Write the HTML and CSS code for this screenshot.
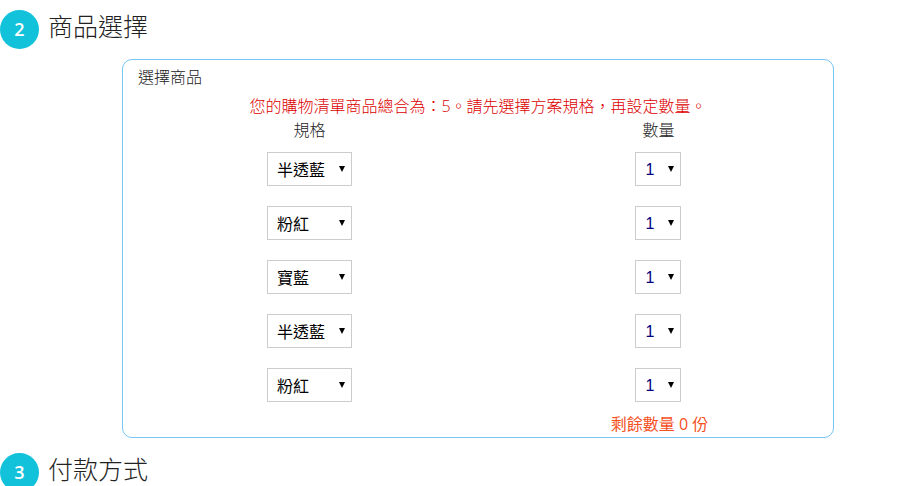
FILE: index.html
```
<!DOCTYPE html>
<html lang="zh-Hant">
<head>
    <meta charset="UTF-8">
    <meta name="viewport" content="width=device-width, initial-scale=1">
    <title>商品選擇</title>
    <link rel="stylesheet" href="styles.css">
</head>
<body>
    <section class="step">
        <div class="step-head">
            <span class="step-num">2</span>
            <h2 class="step-title">商品選擇</h2>
        </div>

        <div class="panel">
            <h3 class="panel-title">選擇商品</h3>
            <p class="notice">您的購物清單商品總合為：5。請先選擇方案規格，再設定數量。</p>
            <table class="items">
                <thead>
                    <tr>
                        <th class="col-spec" id="spec">規格</th>
                        <th id="qty">數量</th>
                    </tr>
                </thead>
                <tbody>
                    <tr>
                        <td><select class="select select-spec" aria-labelledby="spec"><option selected>半透藍</option><option>粉紅</option><option>寶藍</option></select></td>
                        <td><select class="select select-qty" aria-labelledby="qty"><option>0</option><option selected>1</option></select></td>
                    </tr>
                    <tr>
                        <td><select class="select select-spec" aria-labelledby="spec"><option>半透藍</option><option selected>粉紅</option><option>寶藍</option></select></td>
                        <td><select class="select select-qty" aria-labelledby="qty"><option>0</option><option selected>1</option></select></td>
                    </tr>
                    <tr>
                        <td><select class="select select-spec" aria-labelledby="spec"><option>半透藍</option><option>粉紅</option><option selected>寶藍</option></select></td>
                        <td><select class="select select-qty" aria-labelledby="qty"><option>0</option><option selected>1</option></select></td>
                    </tr>
                    <tr>
                        <td><select class="select select-spec" aria-labelledby="spec"><option selected>半透藍</option><option>粉紅</option><option>寶藍</option></select></td>
                        <td><select class="select select-qty" aria-labelledby="qty"><option>0</option><option selected>1</option></select></td>
                    </tr>
                    <tr>
                        <td><select class="select select-spec" aria-labelledby="spec"><option>半透藍</option><option selected>粉紅</option><option>寶藍</option></select></td>
                        <td><select class="select select-qty" aria-labelledby="qty"><option>0</option><option selected>1</option></select></td>
                    </tr>
                </tbody>
                <tfoot>
                    <tr>
                        <td></td>
                        <td class="remain">剩餘數量 0 份</td>
                    </tr>
                </tfoot>
            </table>
        </div>
    </section>

    <section class="step">
        <div class="step-head">
            <span class="step-num">3</span>
            <h2 class="step-title">付款方式</h2>
        </div>
    </section>
</body>
</html>
```

FILE: styles.css
```
* {
    box-sizing: border-box;
}

body {
    margin: 0;
    padding-top: 10px;
    background: #fff;
    color: #222;
    font-family: "Open Sans", "Noto Sans CJK TC", sans-serif;
    font-size: 16px;
    font-weight: 300;
    line-height: 24px;
}

.step {
    margin-bottom: 15px;
}

.step:last-child {
    margin-bottom: 0;
}

.step-head {
    display: flex;
    gap: 9px;
}

.step-num {
    width: 39px;
    height: 39px;
    border-radius: 50%;
    background: #12c2da;
    color: #fff;
    font-size: 18px;
    font-weight: 600;
    line-height: 39px;
    text-align: center;
}

.step-title {
    margin: 0;
    font-size: 25px;
    font-weight: 300;
    line-height: 32px;
}

/* 商品選擇外框 */
.panel {
    margin: 10px 65px 0 122px;
    padding: 5px 6px 1px;
    border: 1px solid #76c5f7;
    border-radius: 10px;
}

.panel-title {
    margin: 0 0 5px;
    padding-left: 9px;
    font-size: 16px;
    font-weight: 300;
}

.notice {
    margin: 0;
    color: #d00;
    text-align: center;
}

.items {
    width: 100%;
    border-collapse: collapse;
    table-layout: fixed;
    text-align: center;
}

.items th,
.items td {
    padding: 0 2px 0 0;
    font-weight: 300;
}

.items tbody td {
    padding: 10px 2px 10px 0;
}

.items .col-spec {
    width: 52%;
}

.items .remain {
    padding-right: 0;
    color: #f4511e;
    font-weight: 400;
}

/* 下拉選單 */
.select {
    display: block;
    height: 34px;
    margin: 0 auto;
    padding: 2px 18px 0 9px;
    border: 1px solid #ccc;
    border-radius: 0;
    background: #fff url("data:image/svg+xml,%3Csvg xmlns='http://www.w3.org/2000/svg' width='6' height='6'%3E%3Cpath d='M0 0h6L3 6z'/%3E%3C/svg%3E") no-repeat right 6px center;
    color: #000;
    font-family: "Liberation Sans", "Noto Sans CJK TC", sans-serif;
    font-size: 16px;
    font-weight: 400;
    appearance: none;
}

.select-spec {
    width: 85px;
}

.select-qty {
    width: 46px;
    padding-top: 0;
    color: #000080;
}
```
